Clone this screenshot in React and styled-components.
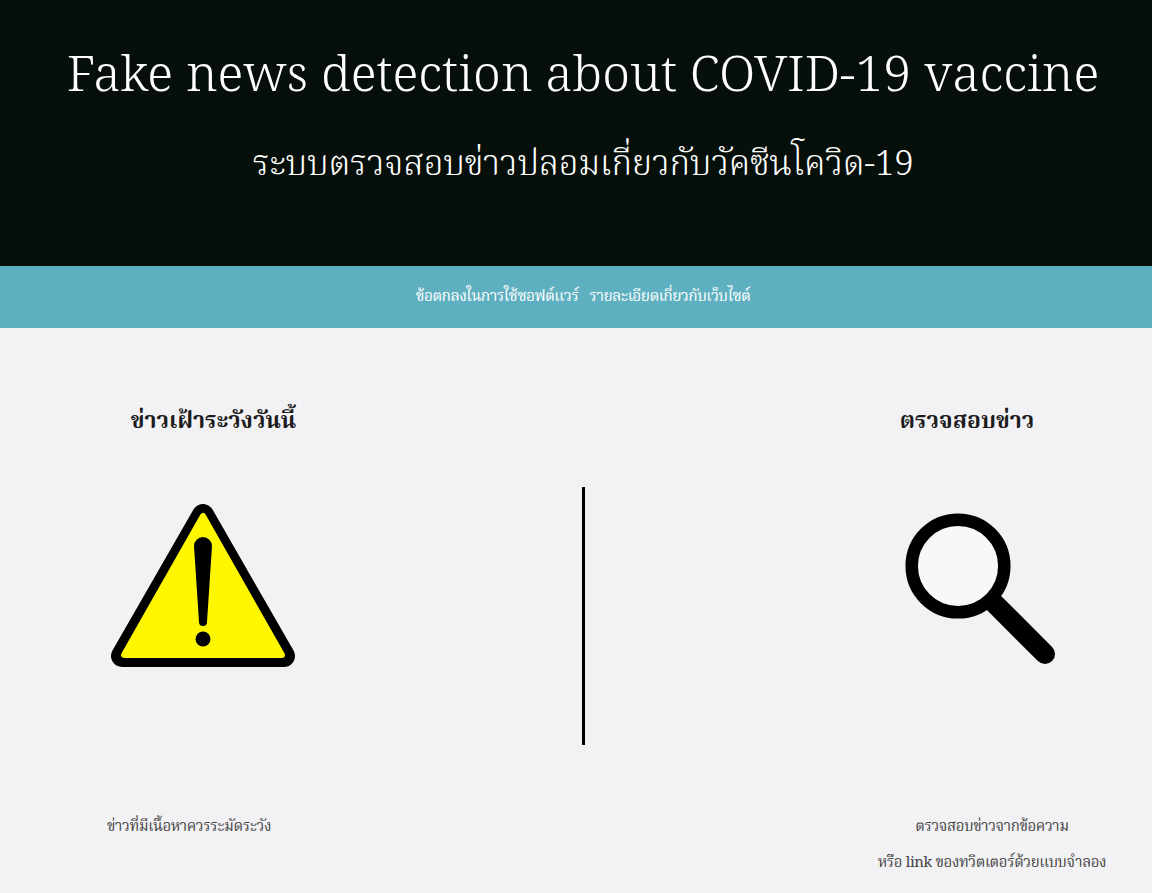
import React from "react";
import styled, { createGlobalStyle } from "styled-components";

const Global = createGlobalStyle`
  html, body { margin: 0; padding: 0; background: #f2f2f5; }
  body { font-family: "Noto Serif Thai", "Liberation Serif", serif; }
`;
const Page = styled.div`width: 1152px; height: 893px; overflow: hidden; display: flex; flex-direction: column;`;
const Header = styled.header`
  height: 266px; padding-left: 14px; box-sizing: border-box; background: #060f09; color: #fff; display: flex; flex-direction: column; align-items: center;
`;
const Title = styled.h1`
  margin: 48px 0 0; font-size: 50px; line-height: 60px; font-weight: 300; white-space: nowrap;
`;
const Subtitle = styled.h2`
  margin: 36px 0 0; font-size: 35px; line-height: 44px; font-weight: 300; letter-spacing: -0.25px; white-space: nowrap;
`;
const Nav = styled.nav`
  height: 62px; padding-left: 14px; box-sizing: border-box; background: #5eb0c0; display: flex; justify-content: center; align-items: center; gap: 11px;
`;
const NavLink = styled.a`color: #fff; font-size: 15.5px; font-weight: 400; letter-spacing: -0.6px; white-space: nowrap;`;
const Main = styled.main`
  flex: 1; display: grid; grid-template-columns: 407px 352px 393px; grid-template-rows: 159px 258px 1fr;
`;
const Heading = styled.h3`
  margin: 0; padding-top: 76px; font-size: 23px; line-height: 36px; font-weight: 700; color: #1c1c1c; text-align: center; white-space: nowrap;
  padding-left: ${p => p.$left || 0}px;
`;
const IconCell = styled.div`
  display: flex; padding-left: ${p => p.$left || 0}px; padding-top: ${p => p.$top || 0}px;
`;
const DividerCell = styled.div`display: flex; justify-content: center;`;
const Divider = styled.div`width: 3px; height: 258px; background: #000;`;
const Caption = styled.div`
  padding-top: 64px; padding-left: ${p => p.$left || 0}px; padding-right: ${p => p.$right || 0}px;
  text-align: center; font-size: 15px; line-height: 36px; letter-spacing: -0.4px; color: #444; white-space: nowrap;
`;
const Spacer = styled.div``;

const Warning = () => (
  <svg width="186" height="164" viewBox="0 0 186 164">
    <path d="M93 11 L12 152 H174 Z" fill="#000" stroke="#000" strokeWidth="22" strokeLinejoin="round" />
    <path d="M93 12 L14 151 H172 Z" fill="#fff700" stroke="#fff700" strokeWidth="6" strokeLinejoin="round" />
    <path d="M84 42 A9 9 0 0 1 102 42 L97 118 A4 4 0 0 1 89 118 Z" fill="#000" />
    <circle cx="93" cy="135" r="7.5" fill="#000" />
  </svg>
);
const Search = () => (
  <svg width="152" height="152" viewBox="0 0 152 152">
    <circle cx="53" cy="53" r="46.3" fill="#f8f8fb" stroke="#000" strokeWidth="12.5" />
    <line x1="88" y1="89" x2="140" y2="141" stroke="#000" strokeWidth="20" strokeLinecap="round" />
  </svg>
);

export default function App() {
  return (
    <Page>
      <Global />
      <Header>
        <Title>Fake news detection about COVID-19 vaccine</Title>
        <Subtitle>ระบบตรวจสอบข่าวปลอมเกี่ยวกับวัคซีนโควิด-19</Subtitle>
      </Header>
      <Nav>
        <NavLink>ข้อตกลงในการใช้ซอฟต์แวร์</NavLink>
        <NavLink>รายละเอียดเกี่ยวกับเว็บไซต์</NavLink>
      </Nav>
      <Main>
        <Heading $left={20}>ข่าวเฝ้าระวังวันนี้</Heading>
        <Spacer />
        <Heading $left={23}>ตรวจสอบข่าว</Heading>
        <IconCell $left={110} $top={17}><Warning /></IconCell>
        <DividerCell><Divider /></DividerCell>
        <IconCell $left={146} $top={26}><Search /></IconCell>
        <Caption $right={29}>ข่าวที่มีเนื้อหาควรระมัดระวัง</Caption>
        <Spacer />
        <Caption $left={73}>ตรวจสอบข่าวจากข้อความ<br />หรือ link ของทวิตเตอร์ด้วยแบบจำลอง</Caption>
      </Main>
    </Page>
  );
}
